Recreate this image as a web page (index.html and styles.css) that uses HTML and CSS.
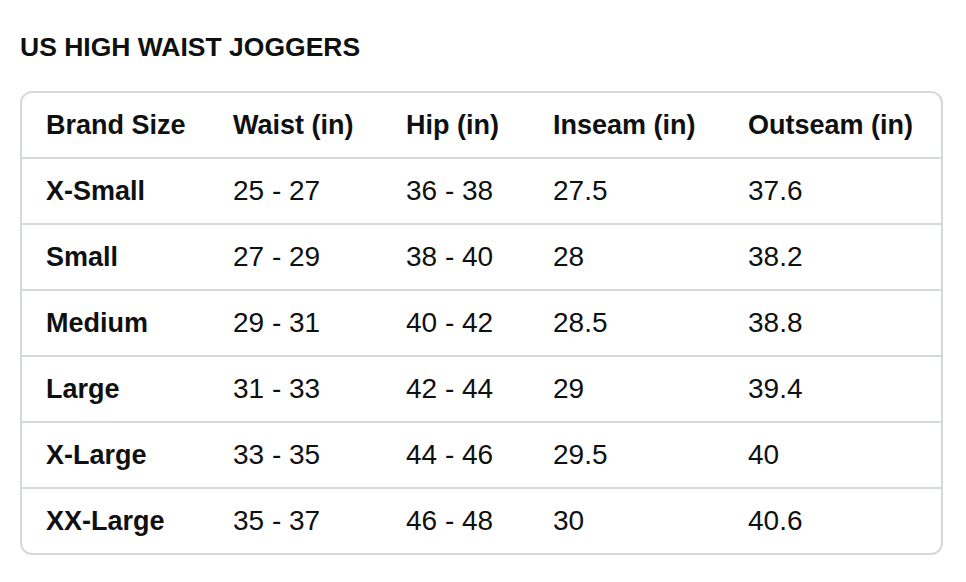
FILE: index.html
```html
<!DOCTYPE html>
<html lang="en">
<head>
<meta charset="utf-8">
<title>US High Waist Joggers</title>
<link rel="stylesheet" href="styles.css">
</head>
<body>
<main class="page">
  <h2 class="title">US HIGH WAIST JOGGERS</h2>
  <div class="chart">
    <table class="size-table">
      <colgroup>
        <col class="c1"><col class="c2"><col class="c3"><col class="c4"><col class="c5">
      </colgroup>
      <thead>
        <tr><th>Brand Size</th><th>Waist (in)</th><th>Hip (in)</th><th>Inseam (in)</th><th>Outseam (in)</th></tr>
      </thead>
      <tbody>
        <tr><th>X-Small</th><td>25 - 27</td><td>36 - 38</td><td>27.5</td><td>37.6</td></tr>
        <tr><th>Small</th><td>27 - 29</td><td>38 - 40</td><td>28</td><td>38.2</td></tr>
        <tr><th>Medium</th><td>29 - 31</td><td>40 - 42</td><td>28.5</td><td>38.8</td></tr>
        <tr><th>Large</th><td>31 - 33</td><td>42 - 44</td><td>29</td><td>39.4</td></tr>
        <tr><th>X-Large</th><td>33 - 35</td><td>44 - 46</td><td>29.5</td><td>40</td></tr>
        <tr><th>XX-Large</th><td>35 - 37</td><td>46 - 48</td><td>30</td><td>40.6</td></tr>
      </tbody>
    </table>
  </div>
</main>
</body>
</html>
```
FILE: styles.css
```css
* { box-sizing: border-box; }
html, body { margin: 0; background: #ffffff; }
body {
  font-family: "Liberation Sans", Arial, sans-serif;
  color: #0f1111;
}
.page {
  padding: 32px 20px 20px 20px;
}
.title {
  margin: 0 0 29px 0;
  font-size: 26.5px;
  font-weight: 700;
  line-height: 30px;
}
.chart {
  width: 923px;
  border: 2px solid #d5d9d9;
  border-radius: 12px;
  overflow: hidden;
}
.size-table {
  width: 100%;
  border-collapse: separate;
  border-spacing: 0;
  table-layout: fixed;
  font-size: 27px;
}
.c1 { width: 186px; }
.c2 { width: 173px; }
.c3 { width: 147px; }
.c4 { width: 195px; }
.size-table th,
.size-table td {
  height: 64px;
  padding: 0 0 0 25px;
  text-align: left;
  vertical-align: middle;
  white-space: nowrap;
}
.size-table th { font-weight: 700; }
.size-table td { font-weight: 400; font-size: 28px; }
.size-table tr > :first-child { padding-left: 24px; }
.size-table tbody th,
.size-table tbody td {
  height: 66px;
  border-top: 2px solid #d5d9d9;
}
```
